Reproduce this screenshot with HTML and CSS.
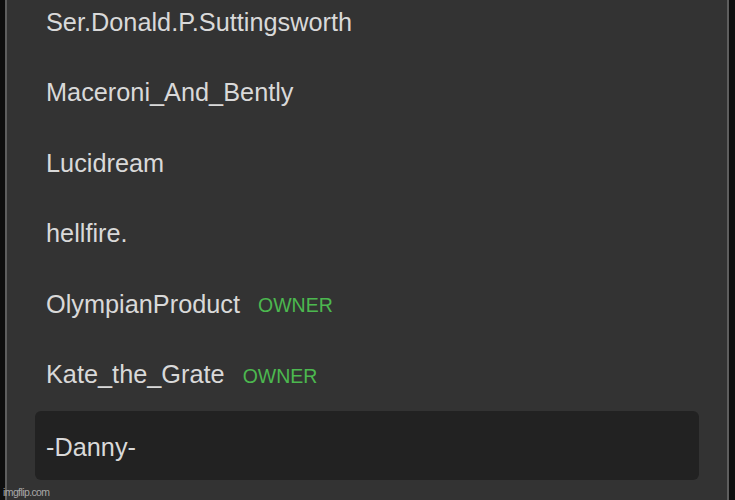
FILE: index.html
```html
<!DOCTYPE html>
<html lang="en">
<head>
<meta charset="utf-8">
<title>Members</title>
<link rel="stylesheet" href="styles.css">
</head>
<body>
  <div class="frame">
    <div class="panel">
      <ul class="members">
        <li class="member"><span class="name">Ser.Donald.P.Suttingsworth</span></li>
        <li class="member"><span class="name">Maceroni_And_Bently</span></li>
        <li class="member"><span class="name">Lucidream</span></li>
        <li class="member"><span class="name">hellfire.</span></li>
        <li class="member"><span class="name">OlympianProduct</span><span class="role">OWNER</span></li>
        <li class="member"><span class="name">Kate_the_Grate</span><span class="role">OWNER</span></li>
        <li class="member selected"><span class="name">-Danny-</span></li>
      </ul>
    </div>
  </div>
  <div class="watermark">imgflip.com</div>
</body>
</html>
```
FILE: styles.css
```css
html, body {
    margin: 0;
    height: 100%;
    background: #0e0e0e;
    overflow: hidden;
}
body {
    font-family: "Liberation Sans", Arial, sans-serif;
}
.frame {
    height: 100%;
    padding: 0 6px 0 5px;
    box-sizing: border-box;
}
.panel {
    height: 100%;
    background: #333333;
    border-left: 2px solid #5e5e5e;
    border-right: 2px solid #5e5e5e;
    overflow: hidden;
}
.members {
    list-style: none;
    margin: -13px 0 0 0;
    padding: 0 28px;
}
.member {
    height: 70.5px;
    display: flex;
    align-items: center;
    padding-left: 11px;
    color: #d9d9d9;
    font-size: 25.3px;
}
.role {
    color: #4cb84f;
    font-size: 19.5px;
    margin-left: 18px;
    margin-top: 3px;
}
.selected {
    background: #222222;
    border-radius: 6px;
    height: 69px;
    margin-top: 1px;
    padding-top: 3px;
    box-sizing: border-box;
}
.watermark {
    position: absolute;
    left: 3px;
    bottom: 2px;
    font-size: 10.5px;
    color: #a8a8a8;
    letter-spacing: -0.6px;
}
```
